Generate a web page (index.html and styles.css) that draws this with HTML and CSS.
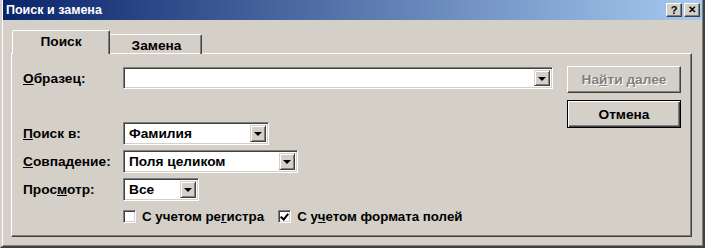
FILE: index.html
```html
<!DOCTYPE html>
<html lang="ru">
<head>
    <meta charset="UTF-8" />
    <title>Поиск и замена</title>
    <link rel="stylesheet" href="styles.css">
</head>
<body>

<div class="window">
    <div class="titlebar">
        <span class="title">Поиск и замена</span>
        <div class="title-buttons">
            <span class="tbtn">?</span>
            <span class="tbtn close">&#x2715;</span>
        </div>
    </div>

    <div class="content">
        <div class="tabs">
            <div class="tab active">Поиск</div>
            <div class="tab">Замена</div>
        </div>

        <div class="panel">
            <div class="form">
                <div class="row first">
                    <label class="label"><u>О</u>бразец:</label>
                    <div class="combo wide">
                        <span class="value"></span>
                        <span class="arrow"></span>
                    </div>
                </div>
                <div class="row">
                    <label class="label"><u>П</u>оиск в:</label>
                    <div class="combo field">
                        <span class="value">Фамилия</span>
                        <span class="arrow"></span>
                    </div>
                </div>
                <div class="row">
                    <label class="label"><u>С</u>овпадение:</label>
                    <div class="combo match">
                        <span class="value">Поля целиком</span>
                        <span class="arrow"></span>
                    </div>
                </div>
                <div class="row">
                    <label class="label">Прос<u>м</u>отр:</label>
                    <div class="combo view">
                        <span class="value">Все</span>
                        <span class="arrow"></span>
                    </div>
                </div>
                <div class="checks">
                    <label class="check"><span class="box"></span>С учетом ре<u>г</u>истра</label>
                    <label class="check"><span class="box checked"></span>С у<u>ч</u>етом формата полей</label>
                </div>
            </div>

            <div class="buttons">
                <button class="btn disabled">На<u>й</u>ти далее</button>
                <button class="btn default">Отмена</button>
            </div>
        </div>
    </div>
</div>

</body>
</html>
```

FILE: styles.css
```css
body {
    margin: 0;
    background-color: #d4d0c8;
    font-family: "Liberation Sans", Arial, sans-serif;
    font-size: 13.7px;
    font-weight: bold;
    color: #000;
}
.window {
    width: 705px;
    height: 248px;
    box-sizing: border-box;
    border: 2px solid;
    border-top: 0;
    border-color: #d4d0c8 #404040 #404040 #d4d0c8;
    box-shadow: inset 1px 0 #fff, inset -1px -1px #808080;
    padding: 0 1px 1px 1px;
}
.titlebar {
    height: 20px;
    display: flex;
    align-items: center;
    justify-content: space-between;
    background: linear-gradient(to right, #0a246a, #a6caf0);
    padding: 0 2px 0 3px;
}
.title {
    color: #fff;
    font-size: 12.5px;
}
.title-buttons {
    display: flex;
    gap: 2px;
}
.tbtn {
    width: 16px;
    height: 14px;
    box-sizing: border-box;
    background: #d4d0c8;
    border: 1px solid;
    border-color: #fff #404040 #404040 #fff;
    box-shadow: inset -1px -1px #808080;
    display: flex;
    align-items: center;
    justify-content: center;
    font-size: 11px;
    line-height: 1;
}
.tbtn.close {
    font-size: 10px;
}
.content {
    padding: 10px 10px 0 8px;
}
.tabs {
    display: flex;
    align-items: flex-end;
    padding-left: 1px;
    margin-bottom: -1px;
}
.tab {
    height: 20px;
    width: 94px;
    box-sizing: border-box;
    border: 1px solid;
    border-bottom: 0;
    border-color: #fff #404040 transparent #fff;
    box-shadow: inset -1px 0 #808080;
    border-radius: 2px 2px 0 0;
    display: flex;
    align-items: center;
    justify-content: center;
    padding-top: 2px;
    padding-left: 3px;
}
.tab.active {
    height: 24px;
    width: 98px;
    position: relative;
    z-index: 1;
    background: #d4d0c8;
    margin-right: -2px;
    padding-top: 0;
    padding-left: 0;
    padding-bottom: 2px;
}
.panel {
    height: 184px;
    box-sizing: border-box;
    border: 1px solid;
    border-color: #fff #404040 #404040 #fff;
    box-shadow: inset -1px -1px #808080;
    display: flex;
    padding: 12px 10px 0 11px;
}
.form {
    flex: 1;
    padding-top: 1px;
}
.row {
    display: flex;
    align-items: center;
    margin-bottom: 5px;
}
.row.first {
    margin-bottom: 33px;
}
.label {
    width: 100px;
}
.combo {
    height: 23px;
    box-sizing: border-box;
    background: #fff;
    border: 1px solid;
    border-color: #808080 #fff #fff #808080;
    box-shadow: inset 1px 1px #404040, inset -1px -1px #d4d0c8;
    display: flex;
    align-items: center;
    padding: 2px;
}
.combo.wide { width: 430px; height: 22px; }
.combo.field { width: 146px; }
.combo.match { width: 175px; }
.combo.view { width: 76px; }
.value {
    flex: 1;
    padding-left: 3px;
}
.arrow {
    width: 16px;
    height: 100%;
    box-sizing: border-box;
    background: #d4d0c8;
    border: 1px solid;
    border-color: #d4d0c8 #404040 #404040 #d4d0c8;
    box-shadow: inset 1px 1px #fff, inset -1px -1px #808080;
    display: flex;
    align-items: center;
    justify-content: center;
}
.arrow::after {
    content: "";
    border-left: 4px solid transparent;
    border-right: 4px solid transparent;
    border-top: 4px solid #000;
    margin-top: 1px;
}
.checks {
    display: flex;
    gap: 14px;
    margin-left: 100px;
    margin-top: 8px;
    font-size: 13.3px;
}
.check {
    display: flex;
    align-items: center;
}
.box {
    width: 13px;
    height: 13px;
    box-sizing: border-box;
    background: #fff;
    border: 1px solid;
    border-color: #808080 #fff #fff #808080;
    box-shadow: inset 1px 1px #404040, inset -1px -1px #d4d0c8;
    margin-right: 6px;
    position: relative;
}
.box.checked::after {
    content: "";
    position: absolute;
    left: 3px;
    top: 1px;
    width: 3px;
    height: 6px;
    border: solid #000;
    border-width: 0 2px 2px 0;
    transform: rotate(40deg);
}
.buttons {
    width: 114px;
    display: flex;
    flex-direction: column;
    gap: 7px;
}
.btn {
    height: 27px;
    width: 114px;
    box-sizing: border-box;
    font-family: "Liberation Sans", Arial, sans-serif;
    font-size: 13.7px;
    font-weight: bold;
    background: #d4d0c8;
    border: 1px solid;
    border-color: #fff #404040 #404040 #fff;
    box-shadow: inset -1px -1px #808080, inset 1px 1px #d4d0c8;
    padding: 0;
}
.btn.disabled {
    color: #808080;
    text-shadow: 1px 1px #fff;
}
.btn.default {
    height: 28px;
    border: 1px solid #000;
    box-shadow: inset 1px 1px #fff, inset -1px -1px #404040, inset -2px -2px #808080;
}
```
